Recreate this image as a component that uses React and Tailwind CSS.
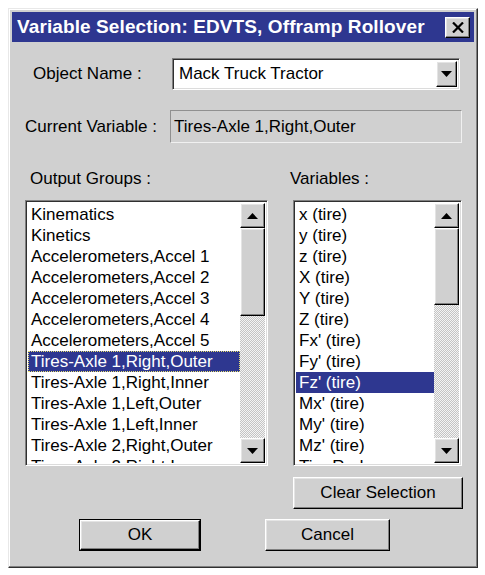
import React from 'react';

// Win9x style bevels
const raised =
  'border border-t-white border-l-white border-r-black border-b-black shadow-[inset_-1px_-1px_#808080,inset_1px_1px_#e4e4e4]';
const sunken =
  'border border-t-[#808080] border-l-[#808080] border-r-white border-b-white shadow-[inset_1px_1px_#303030,inset_-1px_-1px_#dcdcdc]';

const groups = [
  'Kinematics',
  'Kinetics',
  'Accelerometers,Accel 1',
  'Accelerometers,Accel 2',
  'Accelerometers,Accel 3',
  'Accelerometers,Accel 4',
  'Accelerometers,Accel 5',
  'Tires-Axle 1,Right,Outer',
  'Tires-Axle 1,Right,Inner',
  'Tires-Axle 1,Left,Outer',
  'Tires-Axle 1,Left,Inner',
  'Tires-Axle 2,Right,Outer',
  'Tires-Axle 2,Right,Inner',
];

const variables = [
  'x (tire)',
  'y (tire)',
  'z (tire)',
  'X (tire)',
  'Y (tire)',
  'Z (tire)',
  "Fx' (tire)",
  "Fy' (tire)",
  "Fz' (tire)",
  "Mx' (tire)",
  "My' (tire)",
  "Mz' (tire)",
  'Tire Rad',
];

const Arrow = ({ down }) => (
  <svg width="11" height="6" viewBox="0 0 11 6">
    {down ? <polygon points="0,0 11,0 5.5,6" fill="#000" /> : <polygon points="0,6 11,6 5.5,0" fill="#000" />}
  </svg>
);

const ScrollBar = ({ thumb }) => (
  <div className="w-[25px] h-full flex flex-col bg-[repeating-conic-gradient(#f4f4f4_0_25%,#c4c4c4_0_50%)] bg-[length:2px_2px]">
    <div className={`h-[25px] flex items-center justify-center bg-[#d0d0d0] ${raised}`}>
      <Arrow />
    </div>
    <div className={`bg-[#d0d0d0] ${raised}`} style={{ height: thumb }} />
    <div className="flex-1" />
    <div className={`h-[25px] flex items-center justify-center bg-[#d0d0d0] ${raised}`}>
      <Arrow down />
    </div>
  </div>
);

const ListBox = ({ items, selected, width, thumb, focus }) => (
  <div className={`h-[266px] bg-white flex p-[2px] ${sunken}`} style={{ width }}>
    <div className="flex-1 overflow-hidden pt-[1px]">
      {items.map((item, i) => (
        <div
          key={item}
          className={`h-[21px] leading-[21px] pl-[3px] whitespace-nowrap ${
            i === selected ? 'bg-[#2e3790] text-white' : 'text-black'
          } ${i === selected && focus ? 'outline-1 outline-dotted outline-[#e8e070] -outline-offset-1' : ''}`}
        >
          {item}
        </div>
      ))}
    </div>
    <ScrollBar thumb={thumb} />
  </div>
);

export default function App() {
  return (
    <div className="bg-white w-[485px] h-[575px] pt-[8px] pl-[8px] font-['Liberation_Sans',Arial,sans-serif] text-[17px] text-black">
      <div className="w-[470px] h-[560px] bg-[#d0d0d0] border border-t-[#e8e8e8] border-l-[#e8e8e8] border-r-[#303030] border-b-[#303030] shadow-[inset_-1px_-1px_#808080,inset_1px_1px_#ffffff] p-[3px] flex flex-col">
        {/* Title bar */}
        <div className="h-[30px] bg-[#2e3790] flex items-center justify-between pl-[5px] pr-[4px]">
          <span className="text-white font-bold text-[19px] tracking-[0.1px]">Variable Selection: EDVTS, Offramp Rollover</span>
          <div className={`w-[25px] h-[21px] bg-[#d0d0d0] flex items-center justify-center ${raised}`}>
            <svg width="12" height="11" viewBox="0 0 12 11">
              <path d="M1 0.5 L11 10.5 M11 0.5 L1 10.5" stroke="#000" strokeWidth="2.2" />
            </svg>
          </div>
        </div>

        {/* Object name */}
        <div className="flex items-center mt-[16px]">
          <span className="w-[160px] pl-[21px]">Object Name :</span>
          <div className={`w-[288px] h-[32px] bg-white flex items-center p-[2px] ${sunken}`}>
            <span className="flex-1 pl-[4px]">Mack Truck Tractor</span>
            <div className={`w-[21px] h-full flex items-center justify-center bg-[#d0d0d0] ${raised}`}>
              <Arrow down />
            </div>
          </div>
        </div>

        {/* Current variable */}
        <div className="flex items-center mt-[20px]">
          <span className="w-[158px] pl-[13px]">Current Variable :</span>
          <div className="w-[292px] h-[33px] bg-[#d0d0d0] border border-t-[#909090] border-l-[#909090] border-r-[#f0f0f0] border-b-[#f0f0f0] flex items-center pl-[3px]">
            Tires-Axle 1,Right,Outer
          </div>
        </div>

        {/* Labels */}
        <div className="flex mt-[25px] h-[22px] items-center">
          <span className="w-[278px] pl-[18px]">Output Groups :</span>
          <span>Variables :</span>
        </div>

        {/* Lists */}
        <div className="flex mt-[10px] pl-[13px] gap-[25px]">
          <ListBox items={groups} selected={7} width="243px" thumb="88px" focus />
          <ListBox items={variables} selected={8} width="169px" thumb="77px" />
        </div>

        {/* Clear selection */}
        <div className="flex justify-end pr-[11px] mt-[11px]">
          <button className={`w-[170px] h-[32px] bg-[#d0d0d0] ${raised}`}>Clear Selection</button>
        </div>

        {/* OK / Cancel */}
        <div className="flex mt-[10px] pl-[67px] gap-[64px]">
          <button className="w-[122px] h-[32px] bg-[#d0d0d0] border border-black p-0">
            <div className={`w-full h-full flex items-center justify-center ${raised}`}>OK</div>
          </button>
          <button className={`w-[125px] h-[32px] bg-[#d0d0d0] ${raised}`}>Cancel</button>
        </div>
      </div>
    </div>
  );
}
